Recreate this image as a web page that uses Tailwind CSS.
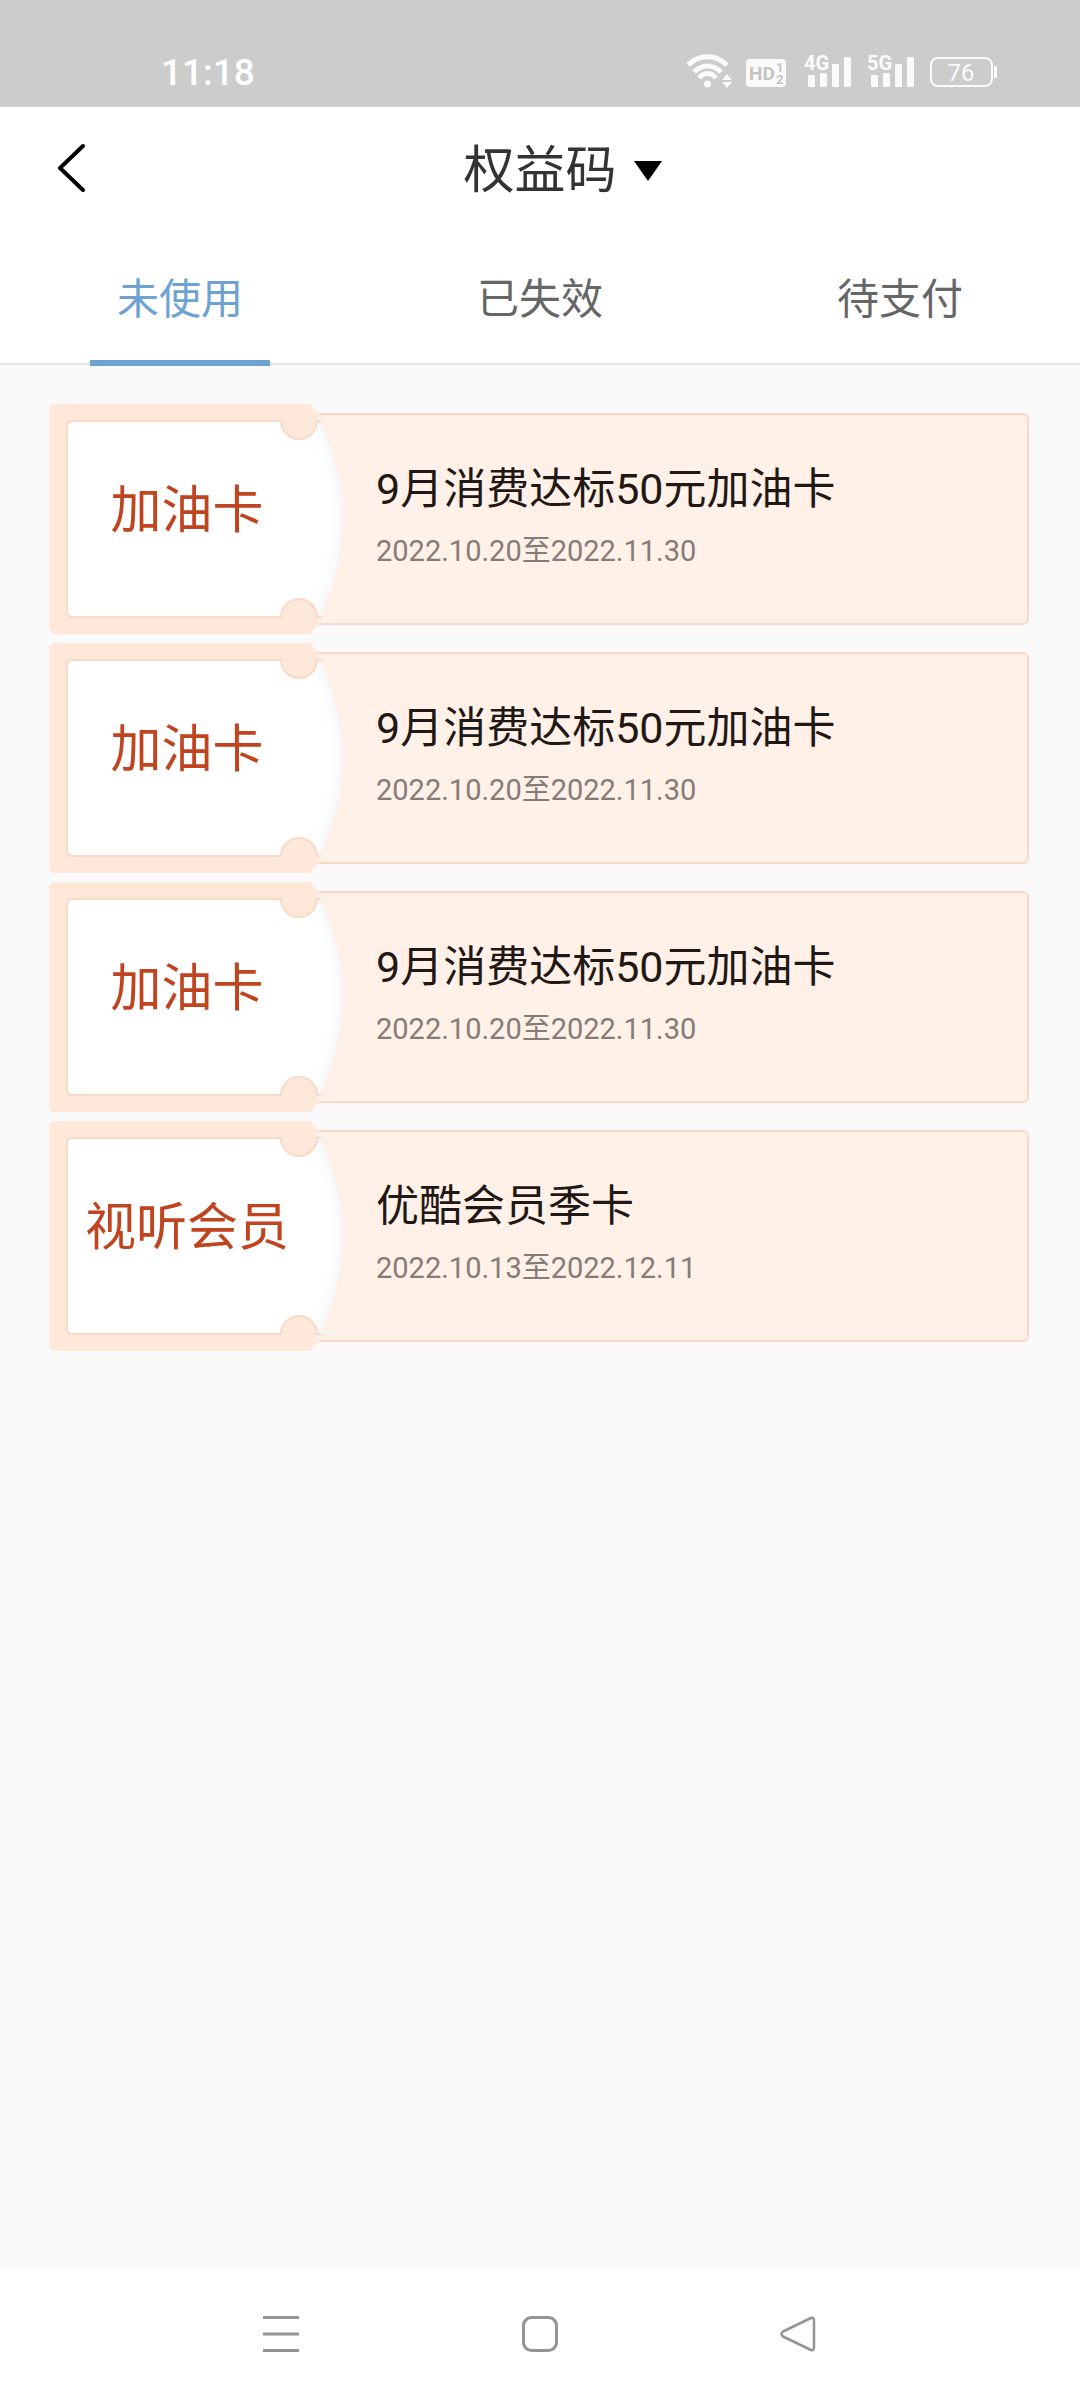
<!DOCTYPE html>
<html lang="zh-CN">

<head>
  <meta charset="UTF-8" />
  <meta name="viewport" content="width=device-width, initial-scale=1.0" />
  <title>权益码</title>
  <script src="https://cdn.jsdelivr.net/npm/@tailwindcss/browser@4"></script>
</head>

<body class="flex min-h-screen flex-col bg-[#fafafa] font-[Roboto,'Noto_Sans_CJK_SC',sans-serif] text-[#333333]">
  <!-- Status bar -->
  <div class="flex h-[107px] items-end justify-between bg-[#cccccc] pr-[82px] pb-[12px] pl-[161px] text-white">
    <time class="text-[37px] leading-[44px] font-medium">11:18</time>
    <svg class="h-[44px] w-[312px]" viewBox="0 1 312 44" fill="none" aria-hidden="true">
      <!-- wifi -->
      <g stroke="#fafafa" stroke-width="5">
        <path d="M2 15C13 4 30 4 41 15" />
        <path d="M8 22C16 14 27 14 35 22" />
        <path d="M13 28C18 22 25 22 30 28" />
      </g>
      <circle cx="21.500" cy="34" r="3.500" fill="#fafafa" />
      <path d="M41 24l5 6h-10zM41 38l5-6h-10z" fill="#fafafa" />
      <!-- HD -->
      <rect x="60" y="9" width="40" height="28" rx="4" fill="#fafafa" />
      <g fill="#c4c4c4" font-weight="700">
        <text x="63" y="30" font-size="19">HD</text>
        <text x="90" y="22" font-size="13">1</text>
        <text x="90" y="34" font-size="13">2</text>
      </g>
      <!-- signal -->
      <g fill="#fafafa">
        <text x="118" y="20" font-size="20" font-weight="700">4G</text>
        <rect x="122" y="25" width="7" height="12" rx="1" />
        <rect x="134" y="23" width="7" height="14" rx="1" />
        <rect x="146" y="14" width="7" height="23" rx="1" />
        <rect x="158" y="7" width="7" height="30" rx="1" />
        <text x="181" y="20" font-size="20" font-weight="700">5G</text>
        <rect x="185" y="25" width="7" height="12" rx="1" />
        <rect x="197" y="23" width="7" height="14" rx="1" />
        <rect x="209" y="14" width="7" height="23" rx="1" />
        <rect x="221" y="7" width="7" height="30" rx="1" />
      </g>
      <!-- battery -->
      <rect x="245" y="8" width="61" height="28" rx="7" stroke="#fafafa" stroke-width="2" />
      <rect x="308" y="16" width="3" height="12" rx="1" fill="#fafafa" />
      <text x="275" y="31" font-size="24" text-anchor="middle" fill="#fafafa">76</text>
    </svg>
  </div>

  <header class="bg-white">
    <div class="grid h-[122px] grid-cols-[1fr_auto_1fr] items-center">
      <button type="button" aria-label="返回" class="justify-self-start pl-[56px]">
        <svg class="h-[50px] w-[32px]" viewBox="0 0 32 50" fill="none" stroke="#000" stroke-width="4" stroke-linecap="round" stroke-linejoin="round">
          <path d="M27 3L4 25l23 22" />
        </svg>
      </button>
      <h1 class="pt-[6px] text-[51px] leading-[60px]">权益码</h1>
      <button type="button" aria-label="展开" class="justify-self-start pt-[6px] pl-[17px]">
        <svg class="h-[20px] w-[28px]" viewBox="0 0 28 20">
          <path d="M0 0h28L14 20z" />
        </svg>
      </button>
    </div>

    <nav role="tablist" class="grid grid-cols-3 border-b-2 border-[#e3e3e3] text-[42px] leading-[126px] text-[#666666]">
      <button type="button" class="group relative pt-[8px] aria-selected:text-[#6ea2d0]" role="tab" aria-selected="true">未使用
        <span class="absolute inset-x-1/4 -bottom-[3px] h-[6px] group-aria-selected:bg-[#6ea2d0]"></span>
      </button>
      <button type="button" class="group relative pt-[8px] aria-selected:text-[#6ea2d0]" role="tab" aria-selected="false">已失效
        <span class="absolute inset-x-1/4 -bottom-[3px] h-[6px] group-aria-selected:bg-[#6ea2d0]"></span>
      </button>
      <button type="button" class="group relative pt-[8px] aria-selected:text-[#6ea2d0]" role="tab" aria-selected="false">待支付
        <span class="absolute inset-x-1/4 -bottom-[3px] h-[6px] group-aria-selected:bg-[#6ea2d0]"></span>
      </button>
    </nav>
  </header>

  <main id="couponList" class="flex flex-1 flex-col gap-[9px] py-[39px] pr-[43px] pl-[49px]">
    <!-- Coupons Rendered Here -->
  </main>

  <!-- System navigation -->
  <footer class="bg-white py-[46px]">
    <div class="mx-auto grid w-[72%] grid-cols-3 justify-items-center">
      <button type="button" aria-label="菜单">
        <svg class="h-[40px] w-[40px]" viewBox="0 0 40 40" stroke="#949494" stroke-width="3">
          <path d="M2 3.500h36M2 20h36M2 36.500h36" />
        </svg>
      </button>
      <button type="button" aria-label="主页">
        <svg class="h-[40px] w-[40px]" viewBox="0 0 40 40" fill="none" stroke="#949494" stroke-width="3">
          <rect x="3.500" y="3.500" width="33" height="33" rx="8" />
        </svg>
      </button>
      <button type="button" aria-label="后退">
        <svg class="h-[40px] w-[40px]" viewBox="0 0 40 40" fill="none" stroke="#949494" stroke-width="2.500" stroke-linejoin="round">
          <path d="M32 4L4 17.500Q1 20 4 22.500L32 36Q35 37 35 33V7Q35 3 32 4z" />
        </svg>
      </button>
    </div>
  </footer>

  <!-- Shared ticket stub artwork -->
  <svg class="absolute h-0 w-0" aria-hidden="true">
    <defs>
      <radialGradient id="stubEdge" gradientUnits="userSpaceOnUse" cx="74" cy="115" r="221">
        <stop offset="0.93" stop-color="#ffffff" />
        <stop offset="0.98" stop-color="#f9fafb" />
        <stop offset="1" stop-color="#f3f3f5" />
      </radialGradient>
      <symbol id="stub" viewBox="0 0 300 230">
        <path d="M6 0H262C264 5 267 8 270 9V221C267 222 264 225 262 230H6Q0 230 0 224V6Q0 0 6 0z" fill="#fde8da" />
        <path d="M266 11H300V219H266z" fill="#fff0e8" />
        <path d="M23 18H271A220 220 0 0 1 271 212H23Q19 212 19 208V22Q19 18 23 18z" fill="url(#stubEdge)" />
        <path d="M268 9A18 18 0 0 1 268 17A18 18 0 0 1 232 17V9z" fill="#fde8da" />
        <path d="M268 221A18 18 0 0 0 268 213A18 18 0 0 0 232 213V221z" fill="#fde8da" />
        <path d="M272 17H268A18 18 0 0 1 232 17H23Q18 17 18 22V208Q18 213 23 213H232A18 18 0 0 1 268 213H272" fill="none" stroke="#f9dac6" stroke-width="2" />
      </symbol>
    </defs>
  </svg>

  <script>
    const coupons = [
      { type: "加油卡", name: "9月消费达标50元加油卡", start: "2022.10.20", end: "2022.11.30" },
      { type: "加油卡", name: "9月消费达标50元加油卡", start: "2022.10.20", end: "2022.11.30" },
      { type: "加油卡", name: "9月消费达标50元加油卡", start: "2022.10.20", end: "2022.11.30" },
      { type: "视听会员", name: "优酷会员季卡", start: "2022.10.13", end: "2022.12.11" }
    ];

    const couponList = document.getElementById("couponList");
    const tabs = document.querySelectorAll("[role=tab]");

    function renderCoupons(list) {
      couponList.innerHTML = list.map(coupon => `
        <article class="relative flex h-[230px] rounded-lg bg-[#fbf9f9]">
          <div class="absolute inset-y-[9px] right-[8px] left-[266px] rounded-r-[6px] border-2 border-l-0 border-[#f9d9c5] bg-[#fff0e8]"></div>
          <div class="relative flex w-[300px] shrink-0 items-center justify-center pr-[24px] pb-[16px]">
            <svg class="absolute inset-0 h-full w-full"><use href="#stub" /></svg>
            <span class="relative text-[51px] leading-[60px] text-[#c0441f]">${coupon.type}</span>
          </div>
          <div class="relative flex flex-1 flex-col justify-center gap-[12px] pb-[9px] pl-[27px]">
            <h2 class="text-[43px] leading-[60px] text-[#1f1815]">${coupon.name}</h2>
            <p class="text-[29px] leading-[40px] text-[#857c78]">${coupon.start}至${coupon.end}</p>
          </div>
        </article>
      `).join("");
    }

    tabs.forEach((tab, index) => {
      tab.addEventListener("click", () => {
        tabs.forEach(other => other.setAttribute("aria-selected", other === tab ? "true" : "false"));
        renderCoupons(index === 0 ? coupons : []);
      });
    });

    renderCoupons(coupons);
  </script>
</body>

</html>
